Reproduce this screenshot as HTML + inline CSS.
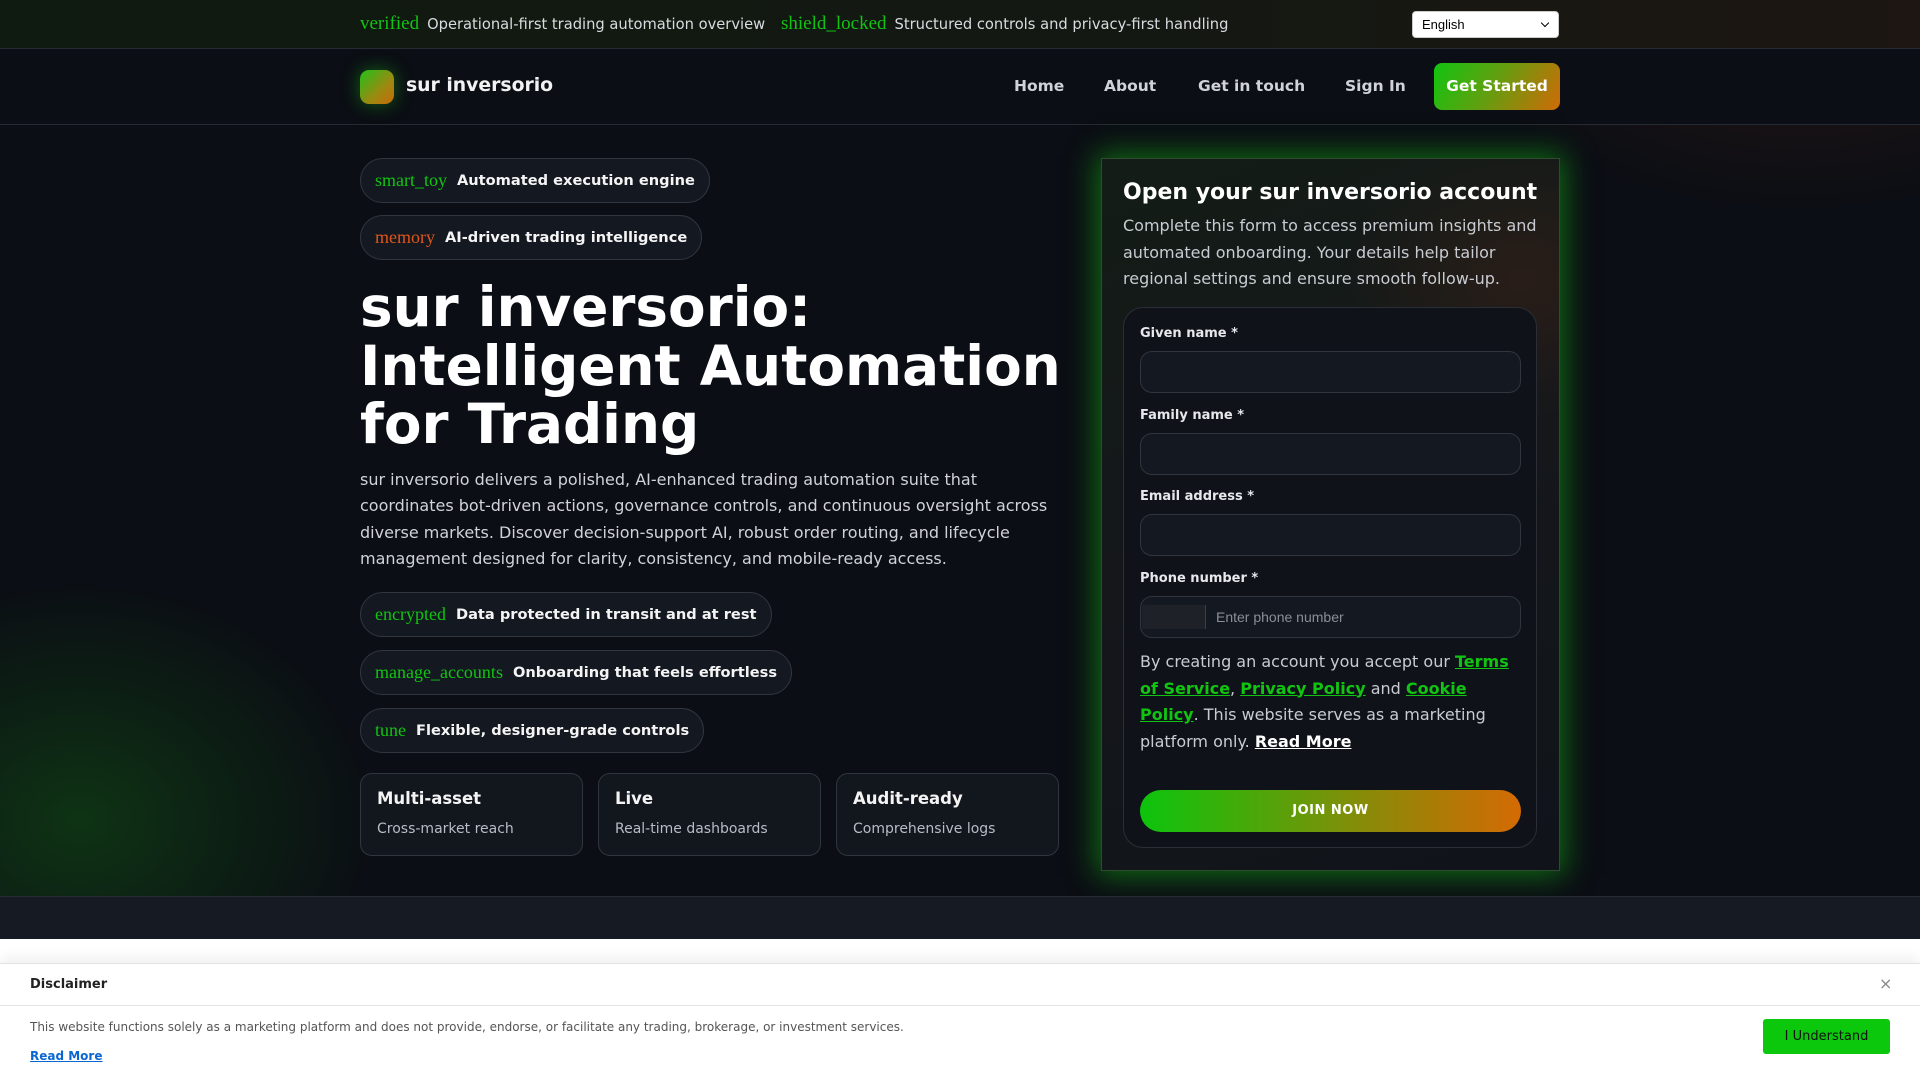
<!DOCTYPE html>
<html><head><meta charset="utf-8"><style>
*{box-sizing:border-box;margin:0;padding:0}
html,body{width:1920px;height:1080px;overflow:hidden}
body{font-family:"DejaVu Sans","Liberation Sans",sans-serif;background:#0b0e14;color:#e6e8ec;position:relative}
.hero-bg{position:absolute;left:0;top:0;width:1920px;height:896px;background:
radial-gradient(ellipse 420px 340px at 80px 820px,rgba(20,120,20,.35),transparent 70%),
radial-gradient(ellipse 500px 300px at 1800px 0px,rgba(90,40,20,.35),transparent 70%),
#0b0e14}
.icon{font-family:"Liberation Serif",serif;color:#12c412}
.topbar{position:absolute;left:0;top:0;width:1920px;height:49px;border-bottom:1px solid #262b33;background:linear-gradient(90deg,#0f1a10,#141812 60%,#1d1612)}
.topbar .t{position:absolute;top:13px;font-size:14.7px;color:#d8dbe0;white-space:nowrap}
.topbar .icon{font-size:19px;margin-right:8px}
.sel{position:absolute;left:1412px;top:11px;width:147px;height:27px;background:#fff;border-radius:4px;border:1px solid #ccc;color:#000;font-size:13px;padding:5px 9px;font-family:"Liberation Sans",sans-serif}
.sel:after{content:"";position:absolute;right:10px;top:8px;width:5px;height:5px;border-right:1.5px solid #000;border-bottom:1.5px solid #000;transform:rotate(45deg)}
.nav{position:absolute;top:49px;left:0;width:1920px;height:76px;border-bottom:1px solid #262b33;background:#0b0e14}
.logo{position:absolute;left:360px;top:21px;width:34px;height:34px;border-radius:9px;background:linear-gradient(135deg,#22c01a,#9a8a10 60%,#c86a08);box-shadow:0 0 18px rgba(30,200,30,.45)}
.brand{position:absolute;left:406px;top:26px;font-size:18.8px;font-weight:bold;color:#f2f2f2}
.nl{position:absolute;top:28px;font-size:15.5px;font-weight:bold;color:#d0d3d8}
.gs{position:absolute;left:1434px;top:14px;width:126px;height:47px;border-radius:8px;background:linear-gradient(120deg,#10c410,#60a010 45%,#cf6a06);color:#fff;font-weight:bold;font-size:15.5px;text-align:center;line-height:47px}
.pill{position:absolute;left:360px;height:45px;border:1px solid #30353e;border-radius:23px;background:#141820;padding:0 14px;display:flex;align-items:center;white-space:nowrap}
.pill .icon{font-size:18px;margin-right:10px}
.pill b{font-size:14.6px;color:#f4f4f4}
h1{position:absolute;left:360px;top:278px;font-size:54.8px;line-height:58.5px;font-weight:bold;color:#fff}
.para{position:absolute;left:360px;top:467px;width:700px;font-size:16px;line-height:26.4px;color:#d0d3d8}
.stat{position:absolute;top:773px;width:223px;height:83px;border:1px solid #30353e;border-radius:12px;background:#12161d;padding:15px 16px}
.stat b{display:block;font-size:16.5px;color:#f4f4f4}
.stat span{display:block;font-size:14px;color:#b8bcc4;margin-top:13px}
.card{position:absolute;left:1101px;top:158px;width:459px;height:713px;border:1px solid #2f4a2f;background:linear-gradient(160deg,#131c16,#15171b 50%,#10141a);box-shadow:0 0 28px 4px rgba(20,190,20,.55)}
.card:before{content:"";position:absolute;inset:0;background:radial-gradient(ellipse 260px 200px at 420px 120px,rgba(90,40,20,.3),transparent 70%)}
.card h2{position:absolute;left:21px;top:21px;font-size:22px;font-weight:bold;color:#fff;white-space:nowrap}
.card .d{position:absolute;left:21px;top:54px;width:420px;font-size:16px;line-height:26.5px;color:#c8ccd2}
.inner{position:absolute;left:21px;top:148px;width:414px;height:541px;border:1px solid #2a2e36;border-radius:20px;background:#0f1319}
.lab{position:absolute;left:16px;font-size:13px;font-weight:bold;color:#e6e8ec}
.inp{position:absolute;left:16px;width:381px;height:42px;border:1px solid #30353e;border-radius:12px;background:#141820}
.legal{position:absolute;left:16px;top:341px;width:385px;font-size:16px;line-height:26.5px;color:#c8ccd2}
.legal a{color:#12c412;font-weight:bold;text-decoration:underline}
.legal a.w{color:#fff}
.join{position:absolute;left:16px;top:482px;width:381px;height:42px;border-radius:21px;background:linear-gradient(90deg,#0cc40c,#8a8a08 60%,#d46a04);color:#fff;font-size:13px;font-weight:bold;text-align:center;line-height:42px;letter-spacing:.5px}
.band{position:absolute;left:0;top:896px;width:1920px;height:43px;background:#161a22;border-top:1px solid #262b33}
.white{position:absolute;left:0;top:939px;width:1920px;height:141px;background:#fff}
.disc{position:absolute;left:0;top:963px;width:1920px;height:117px;background:#fff;border-top:1px solid #e2e2e2;box-shadow:0 -6px 12px rgba(0,0,0,.06);font-family:"DejaVu Sans",sans-serif}
.disc .hd{height:42px;border-bottom:1px solid #e4e4e4}
</style></head><body>
<div class="hero-bg"></div>
<div class="topbar">
<div class="t" style="left:360px;top:13px"><span class="icon">verified</span>Operational-first trading automation overview</div>
<div class="t" style="left:781px;top:13px"><span class="icon">shield_locked</span>Structured controls and privacy-first handling</div>
<div class="sel">English</div>
</div>
<div class="nav">
<div class="logo"></div><div class="brand">sur inversorio</div>
<div class="nl" style="left:1014px">Home</div>
<div class="nl" style="left:1104px">About</div>
<div class="nl" style="left:1198px">Get in touch</div>
<div class="nl" style="left:1345px">Sign In</div>
<div class="gs">Get Started</div>
</div>
<div class="pill" style="top:158px"><span class="icon">smart_toy</span><b>Automated execution engine</b></div>
<div class="pill" style="top:215px"><span class="icon" style="color:#e0561a">memory</span><b>AI-driven trading intelligence</b></div>
<h1>sur inversorio:<br>Intelligent Automation<br>for Trading</h1>
<div class="para">sur inversorio delivers a polished, AI-enhanced trading automation suite that coordinates bot-driven actions, governance controls, and continuous oversight across diverse markets. Discover decision-support AI, robust order routing, and lifecycle management designed for clarity, consistency, and mobile-ready access.</div>
<div class="pill" style="top:592px"><span class="icon">encrypted</span><b>Data protected in transit and at rest</b></div>
<div class="pill" style="top:650px"><span class="icon">manage_accounts</span><b>Onboarding that feels effortless</b></div>
<div class="pill" style="top:708px"><span class="icon">tune</span><b>Flexible, designer-grade controls</b></div>
<div class="stat" style="left:360px"><b>Multi-asset</b><span>Cross-market reach</span></div>
<div class="stat" style="left:598px"><b>Live</b><span>Real-time dashboards</span></div>
<div class="stat" style="left:836px"><b>Audit-ready</b><span>Comprehensive logs</span></div>
<div class="card">
<h2>Open your sur inversorio account</h2>
<div class="d">Complete this form to access premium insights and automated onboarding. Your details help tailor regional settings and ensure smooth follow-up.</div>
<div class="inner">
<div class="lab" style="top:18px">Given name *</div><div class="inp" style="top:43px"></div>
<div class="lab" style="top:100px">Family name *</div><div class="inp" style="top:125px"></div>
<div class="lab" style="top:181px">Email address *</div><div class="inp" style="top:206px"></div>
<div class="lab" style="top:263px">Phone number *</div>
<div class="inp" style="top:288px"><div style="position:absolute;left:1px;top:8px;width:64px;height:24px;background:#1e2228;border-right:1px solid #3a3f48"></div><span style="position:absolute;left:75px;top:12px;font-size:14px;color:#8a8e96;font-family:'Liberation Sans',sans-serif">Enter phone number</span></div>
<div class="legal">By creating an account you accept our <a>Terms of Service</a>, <a>Privacy Policy</a> and <a>Cookie Policy</a>. This website serves as a marketing platform only. <a class="w">Read More</a></div>
<div class="join">JOIN NOW</div>
</div>
</div>
<div class="band"></div>
<div class="white"></div>
<div class="disc">
<div class="hd"><b style="position:absolute;left:30px;top:13px;font-size:13px;color:#222">Disclaimer</b><span style="position:absolute;left:1879px;top:10px;font-size:16px;color:#888">×</span></div>
<div style="position:absolute;left:30px;top:56px;font-size:12px;color:#555">This website functions solely as a marketing platform and does not provide, endorse, or facilitate any trading, brokerage, or investment services.</div>
<div style="position:absolute;left:30px;top:85px;font-size:12px;color:#0a66d0;font-weight:bold;text-decoration:underline">Read More</div>
<div style="position:absolute;left:1763px;top:55px;width:127px;height:35px;background:#0cc80c;border-radius:3px;color:#111;font-size:13px;text-align:center;line-height:35px">I Understand</div>
</div>
</body></html>
